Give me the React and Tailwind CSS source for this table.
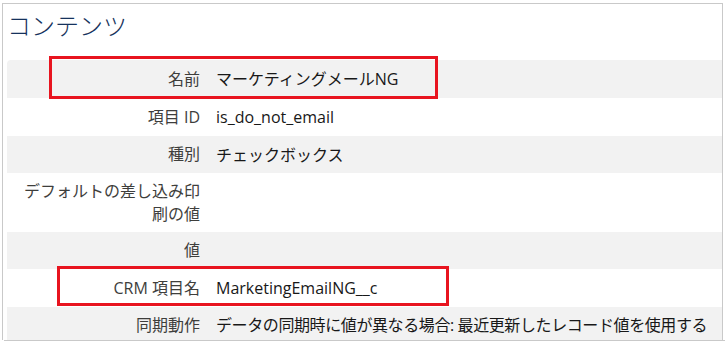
import React from 'react';

const rows = [
    { label: '名前', value: 'マーケティングメールNG', h: 'h-[38px]', shaded: true },
    { label: '項目 ID', value: 'is_do_not_email', h: 'h-[38px]' },
    { label: '種別', value: 'チェックボックス', h: 'h-[37px]', shaded: true },
    { label: 'デフォルトの差し込み印刷の値', value: '', h: 'h-[59px]' },
    { label: '値', value: '', h: 'h-[37px]', shaded: true },
    { label: 'CRM 項目名', value: 'MarketingEmailNG__c', h: 'h-[38px]' },
    { label: '同期動作', value: 'データの同期時に値が異なる場合: 最近更新したレコード値を使用する', h: 'h-[36px]', shaded: true, tight: true },
];

const Row = ({ label, value, h, shaded, first, tight }) => (
    <div className={`flex items-center ${h} ${shaded ? 'bg-[#f2f2f2]' : 'bg-white'} ${first ? 'rounded-tl-[4px]' : ''}`}>
        <div className="w-[197px] shrink-0 pl-[16px] pr-[4px] text-right text-[#3e3e3c] leading-[23px]">
            {label}
        </div>
        <div className={`pl-[12px] text-[#181818] whitespace-nowrap ${tight ? 'tracking-[-0.4px]' : ''}`}>{value}</div>
    </div>
);

const App = () => {
    return (
        <div className="w-[725px] h-[342px] bg-white pl-[2px] pt-[3px] font-['Open_Sans','Noto_Sans_CJK_JP',sans-serif] text-[16px]">
            <div className="relative w-[721px] h-[337px] border border-b-0 border-[#c9c9c9] overflow-hidden pl-[4px]">
                <h2 className="pt-[6px] h-[56px] text-[24px] font-light text-[#16325c] leading-[32px]">
                    コンテンツ
                </h2>
                <div className="flex flex-col">
                    {rows.map((r, i) => (
                        <Row key={r.label} {...r} first={i === 0} />
                    ))}
                </div>

                {/* highlight frames */}
                <div className="absolute left-[46px] top-[52px] w-[389px] h-[43px] border-[3px] border-[#e8141f]" />
                <div className="absolute left-[54px] top-[262px] w-[392px] h-[40px] border-[3px] border-[#e8141f]" />
            </div>
            <div className="ml-[2px] w-[721px] h-[1px] bg-[#c9c9c9]" />
        </div>
    );
};

export default App;
